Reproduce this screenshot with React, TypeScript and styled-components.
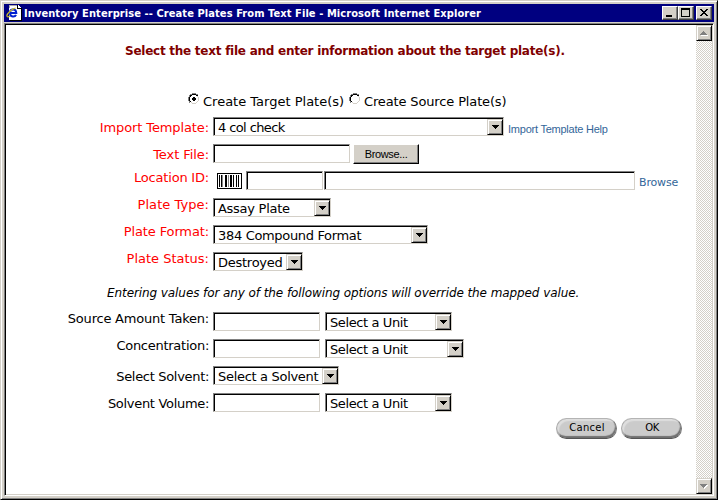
import React from 'react';
import styled, { createGlobalStyle } from 'styled-components';

const FACE = '#d4d0c8';
const VERDANA = '"DejaVu Sans", Verdana, sans-serif';
const ARIAL = '"Liberation Sans", Arial, sans-serif';

const GlobalStyle = createGlobalStyle`
  * { box-sizing: border-box; }
  html, body { margin: 0; background: #fff; }
  body { font: 13px/16px ${VERDANA}; color: #000; }
  svg { display: block; shape-rendering: crispEdges; }
`;

const Frame = styled.div`
  width: 718px;
  height: 500px;
  padding: 3px;
  display: flex;
  flex-direction: column;
  overflow: hidden;
  white-space: nowrap;
  background: ${FACE};
  border-style: solid;
  border-width: 1px;
  border-color: ${FACE} #000 #000 ${FACE};
  box-shadow: inset 1px 1px #fff, inset -1px -1px #808080;
`;

const TitleBar = styled.div`
  flex: none;
  height: 18px;
  display: flex;
  align-items: center;
  padding: 0 2px;
  background: #000080;
`;

const TitleText = styled.div`
  flex: 1;
  margin-left: 2px;
  padding-top: 1px;
  font: bold 11px/14px "DejaVu Sans Condensed", Tahoma, sans-serif;
  letter-spacing: 0.084px;
  color: #fff;
`;

const WindowButton = styled.button<{ $gap?: number }>`
  width: 16px;
  height: 14px;
  margin: 0 0 0 ${(p) => p.$gap ?? 0}px;
  padding: 0;
  border-style: solid;
  border-width: 1px;
  border-color: #fff #404040 #404040 #fff;
  box-shadow: inset -1px -1px #808080;
  background: ${FACE};
`;

const Viewport = styled.div`
  flex: 1;
  min-height: 0;
  margin-top: 1px;
  display: flex;
  border-style: solid;
  border-width: 1px;
  border-color: #808080 #fff #fff #808080;
  box-shadow: inset 1px 1px #000, inset -1px -1px ${FACE};
  padding: 1px;
`;

const Page = styled.main`
  flex: 1;
  min-width: 0;
  background: #fff;
`;

const Scrollbar = styled.div`
  width: 16px;
  display: flex;
  flex-direction: column;
  justify-content: space-between;
  background: repeating-conic-gradient(${FACE} 0 25%, #fff 0 50%) 0 0 / 2px 2px;
`;

const RaisedButton = styled.button`
  flex: none;
  width: 16px;
  height: 16px;
  padding: 0;
  display: flex;
  align-items: center;
  justify-content: center;
  background: ${FACE};
  border-style: solid;
  border-width: 1px;
  border-color: ${FACE} #000 #000 ${FACE};
  box-shadow: inset 1px 1px #fff, inset -1px -1px #808080;
`;

const Heading = styled.h1`
  margin: 0;
  padding: 18px 0 0 119px;
  font-size: 12px;
  line-height: 16px;
  letter-spacing: -0.253px;
  color: #800000;
`;

const Choices = styled.div`
  display: flex;
  height: 24px;
  margin: 34px 0 0 182px;
`;

const Choice = styled.label<{ $ls: number; $width: number }>`
  display: flex;
  gap: 3px;
  width: ${(p) => p.$width}px;
  letter-spacing: ${(p) => p.$ls}px;
`;

const ChoiceText = styled.span`
  padding-top: 1px;
`;

const Row = styled.div`
  display: flex;
  align-items: flex-start;
  height: 27px;
`;

const Label = styled.div<{ $required?: boolean; $low?: boolean; $ls: number }>`
  width: 203px;
  margin: ${(p) => (p.$low ? 3 : -1)}px 4px 0 0;
  text-align: right;
  letter-spacing: ${(p) => p.$ls}px;
  color: ${(p) => (p.$required ? '#f00' : '#000')};
`;

const Field = styled.div<{ $width: number; $gap?: number }>`
  flex: none;
  width: ${(p) => p.$width}px;
  height: 19px;
  margin-left: ${(p) => p.$gap ?? 0}px;
  display: flex;
  justify-content: space-between;
  background: #fff;
  border-style: solid;
  border-width: 1px;
  border-color: #808080 ${FACE} ${FACE} #808080;
  box-shadow: inset 1px 1px #000;
  padding: 1px 0 0 4px;
`;

const FieldText = styled.span<{ $ls: number }>`
  width: 0;
  padding-top: 1px;
  line-height: 16px;
  letter-spacing: ${(p) => p.$ls}px;
`;

const BrowseButton = styled(RaisedButton)`
  width: 66px;
  height: 20px;
  margin-left: 3px;
  border-color: #fff #000 #000 #fff;
  box-shadow: inset -1px -1px #808080;
  color: #000;
  font: 11px/14px ${ARIAL};
  letter-spacing: -0.35px;
`;

const Link = styled.a<{ $top: number; $gap: number; $ls: number; $wide?: boolean }>`
  margin: ${(p) => p.$top}px 0 0 ${(p) => p.$gap}px;
  font: 11px/14px ${(p) => (p.$wide ? VERDANA : ARIAL)};
  letter-spacing: ${(p) => p.$ls}px;
  color: #336699;
`;

const BarcodeSlot = styled.div`
  width: 33px;
  padding: 2px 0 0 4px;
`;

const Note = styled.p`
  margin: 6px 0 0 101px;
  height: 27px;
  font: italic 12px/16px ${VERDANA};
  letter-spacing: -0.084px;
`;

const Actions = styled.div`
  display: flex;
  gap: 4px;
  margin: -2px 0 0 550px;
`;

const PillButton = styled.button<{ $ls: number }>`
  width: 61px;
  height: 21px;
  padding: 0 0 1px 1px;
  border: 1px solid;
  border-color: #b4b4b4 #777 #555 #aaa;
  border-radius: 11px;
  background: #cbcbcb;
  box-shadow: inset -1px -2px 1px #707070, inset 2px 2px 1px #dedede;
  color: #000;
  font: 10px/14px ${VERDANA};
  letter-spacing: ${(p) => p.$ls}px;
`;

function Arrow() {
  return (
    <svg width="7" height="4">
      <path d="M0 0h7v1H0zM1 1h5v1H1zM2 2h3v1H2zM3 3h1v1H3z" />
    </svg>
  );
}

function ScrollArrow({ up }: { up?: boolean }) {
  const d = up
    ? 'M3 0h1v1H3zM2 1h3v1H2zM1 2h5v1H1zM0 3h7v1H0z'
    : 'M0 0h7v1H0zM1 1h5v1H1zM2 2h3v1H2zM3 3h1v1H3z';
  return (
    <svg width="8" height="5">
      <path d={d} fill="#fff" transform="translate(1 1)" />
      <path d={d} fill="#808080" />
    </svg>
  );
}

function Radio({ checked }: { checked?: boolean }) {
  return (
    <svg width="12" height="12">
      <path d="M4 0h4v1H4zM2 1h2v1H2zM8 1h2v1H8zM1 2h1v2H1zM0 4h1v4H0zM1 8h1v2H1z" fill="#808080" />
      <path d="M4 1h4v1H4zM2 2h2v1H2zM8 2h2v1H8zM2 3h1v1H2zM1 4h1v4H1zM2 8h1v1H2z" fill="#000" />
      <path d="M9 3h1v1H9zM10 4h1v4h-1zM9 8h1v1H9zM3 9h1v1H3zM8 9h1v1H8zM4 10h4v1H4z" fill={FACE} />
      {checked && <path d="M5 4h2v1h1v2H7v1H5V7H4V5h1z" />}
    </svg>
  );
}

function Barcode() {
  return (
    <svg width="25" height="16">
      <path d="M.5.5h24v15H.5z" fill="#fff" stroke="#000" />
      <path d="M2 2h1v12H2zM4 2h1v12H4zM8 2h2v12H8zM13 2h2v12h-2zM16 2h1v12h-1zM19 2h1v12h-1zM21 2h1v12h-1z" />
      <path d="M5 2h1v12H5zM11 2h1v12h-1z" fill="#888" />
    </svg>
  );
}

function ExplorerIcon() {
  return (
    <svg width="16" height="16">
      <path d="M3 0h9l3 3v12H3z" fill="#fff" />
      <path d="M3 0h9v1H3zM3 0h1v3H3z" fill="#a8a8a8" />
      <path d="M12 0v3h3v1h-4V0zM15 3h1v13H4v-1h11z" fill="#000" />
      <g shapeRendering="auto" fill="none">
        <path d="M4 8h6.3C10 3.4 4 3.5 4 8s5 4.3 6 1.8" stroke="#0020d0" strokeWidth="2" />
        <path d="M9.5 3.2C6 3.5.5 9 .9 11c.3 1.4 2.2.7 3.1 0" stroke="#c8b828" strokeWidth="1.2" />
      </g>
    </svg>
  );
}

interface SelectProps {
  text: string;
  width: number;
  ls: number;
  gap?: number;
}

function Select({ text, width, ls, gap }: SelectProps) {
  return (
    <Field $width={width} $gap={gap}>
      <FieldText $ls={ls}>{text}</FieldText>
      <RaisedButton><Arrow /></RaisedButton>
    </Field>
  );
}

export default function App() {
  return (
    <>
      <GlobalStyle />
      <Frame>
        <TitleBar>
          <ExplorerIcon />
          <TitleText>Inventory Enterprise -- Create Plates From Text File - Microsoft Internet Explorer</TitleText>
          <WindowButton>
            <svg width="14" height="12"><path d="M3 8h6v2H3z" /></svg>
          </WindowButton>
          <WindowButton>
            <svg width="14" height="12"><path d="M2 1h9v9H2zM3 3v6h7V3z" fillRule="evenodd" /></svg>
          </WindowButton>
          <WindowButton $gap={2}>
            <svg width="14" height="12">
              <path d="M3 2h2v1H3zM9 2h2v1H9zM4 3h2v1H4zM8 3h2v1H8zM5 4h4v1H5zM6 5h2v1H6zM5 6h4v1H5zM4 7h2v1H4zM8 7h2v1H8zM3 8h2v1H3zM9 8h2v1H9z" />
            </svg>
          </WindowButton>
        </TitleBar>
        <Viewport>
          <Page>
            <Heading>Select the text file and enter information about the target plate(s).</Heading>
            <Choices>
              <Choice $width={161} $ls={0}><Radio checked /><ChoiceText>Create Target Plate(s)</ChoiceText></Choice>
              <Choice $width={161} $ls={-0.141}><Radio /><ChoiceText>Create Source Plate(s)</ChoiceText></Choice>
            </Choices>
            <Row>
              <Label $required $low $ls={-0.106}>Import Template:</Label>
              <Select text="4 col check" width={291} ls={-0.6} />
              <Link $top={5} $gap={4} $ls={-0.233}>Import Template Help</Link>
            </Row>
            <Row>
              <Label $required $low $ls={-0.075}>Text File:</Label>
              <Field $width={137} />
              <BrowseButton>Browse...</BrowseButton>
            </Row>
            <Row>
              <Label $required $ls={-0.2}>Location ID:</Label>
              <BarcodeSlot><Barcode /></BarcodeSlot>
              <Field $width={77} />
              <Field $width={311} $gap={1} />
              <Link $top={5} $gap={4} $ls={-0.157} $wide>Browse</Link>
            </Row>
            <Row>
              <Label $required $ls={0.05}>Plate Type:</Label>
              <Select text="Assay Plate" width={118} ls={-0.275} />
            </Row>
            <Row>
              <Label $required $ls={-0.121}>Plate Format:</Label>
              <Select text="384 Compound Format" width={215} ls={-0.329} />
            </Row>
            <Row>
              <Label $required $ls={0}>Plate Status:</Label>
              <Select text="Destroyed" width={90} ls={-0.26} />
            </Row>
            <Note>Entering values for any of the following options will override the mapped value.</Note>
            <Row>
              <Label $ls={-0.214}>Source Amount Taken:</Label>
              <Field $width={107} />
              <Select text="Select a Unit" width={127} ls={-0.392} gap={5} />
            </Row>
            <Row>
              <Label $ls={-0.267}>Concentration:</Label>
              <Field $width={107} />
              <Select text="Select a Unit" width={139} ls={-0.392} gap={5} />
            </Row>
            <Row>
              <Label $low $ls={-0.313}>Select Solvent:</Label>
              <Select text="Select a Solvent" width={126} ls={-0.306} />
            </Row>
            <Row>
              <Label $low $ls={-0.309}>Solvent Volume:</Label>
              <Field $width={107} />
              <Select text="Select a Unit" width={127} ls={-0.392} gap={5} />
            </Row>
            <Actions>
              <PillButton $ls={0.28}>Cancel</PillButton>
              <PillButton $ls={-0.5}>OK</PillButton>
            </Actions>
          </Page>
          <Scrollbar>
            <RaisedButton><ScrollArrow up /></RaisedButton>
            <RaisedButton><ScrollArrow /></RaisedButton>
          </Scrollbar>
        </Viewport>
      </Frame>
    </>
  );
}
